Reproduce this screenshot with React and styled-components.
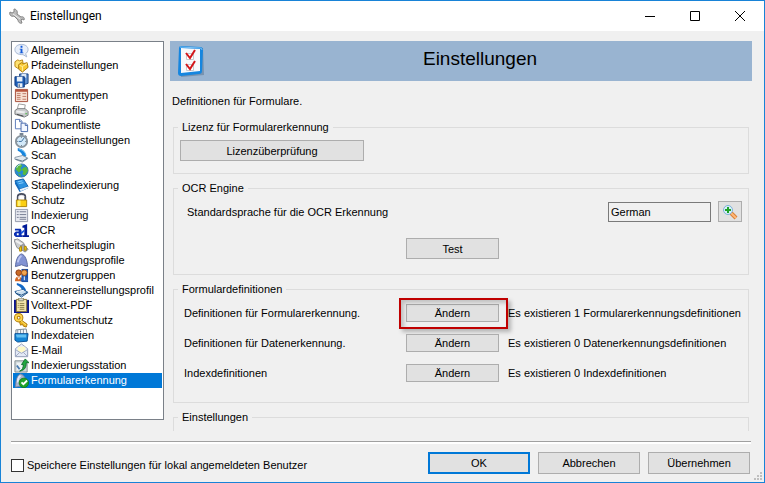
import React, { useState } from "react";
import styled, { createGlobalStyle, css } from "styled-components";

const GlobalStyle = createGlobalStyle`
  * { box-sizing: border-box; }
  body { margin: 0; background: #f0f0f0; }
  body, button, input {
    font-family: "Liberation Sans", Arial, sans-serif;
    font-size: 11px;
    line-height: 14px;
    color: #000;
  }
`;

const Window = styled.div`
  display: flex;
  flex-direction: column;
  height: 100vh;
  border: 1px solid #1883d7;
  background: #f0f0f0;
  overflow: hidden;
  position: relative;
`;

const TitleBar = styled.header`
  display: flex;
  align-items: center;
  flex: none;
  height: 30px;
  padding: 0 2px 0 8px;
  background: #fff;
`;

const WindowTitle = styled.h1`
  flex: 1;
  margin: 0 0 0 5px;
  font: 400 12px/16px Roboto, "Liberation Sans", sans-serif;
`;

const CaptionButton = styled.button`
  display: flex;
  align-items: center;
  justify-content: center;
  width: 45px;
  height: 28px;
  padding: 0;
  border: 0;
  background: none;
`;

const Body = styled.div`
  display: flex;
  flex: 1;
  min-height: 0;
  gap: 6px;
  padding: 10px 12px 0 10px;
`;

const CategoryList = styled.ul`
  flex: none;
  width: 153px;
  margin: 0 0 11px;
  padding: 1px;
  border: 1px solid #7a8088;
  background: #fff;
  list-style: none;
  overflow: hidden;
`;

const CategoryButton = styled.button`
  display: flex;
  align-items: center;
  gap: 2px;
  width: 100%;
  height: 15px;
  padding: 0 0 0 1px;
  border: 0;
  background: ${(p) => (p.$selected ? "#0078d7" : "transparent")};
  color: ${(p) => (p.$selected ? "#fff" : "#000")};
  white-space: nowrap;
  svg { flex: none; }
`;

const CategoryName = styled.span`
  padding-bottom: 2px;
`;

const Pane = styled.main`
  flex: 1;
  min-width: 0;
  overflow: hidden;
`;

const Banner = styled.div`
  display: grid;
  grid-template-columns: 40px 1fr 2px;
  align-items: center;
  height: 40px;
  background: #99b4d1;
`;

const BannerTitle = styled.h2`
  margin: 0;
  padding-bottom: 4px;
  font-size: 19px;
  font-weight: 400;
  line-height: 24px;
  text-align: center;
`;

const Intro = styled.p`
  margin: 13px 0 12px 2px;
`;

const Groups = styled.div`
  display: flex;
  flex-direction: column;
  gap: 7px;
  padding: 0 3px;
`;

const Group = styled.fieldset`
  flex: none;
  min-width: 0;
  margin: 0;
  padding: 6px 6px ${(p) => p.$bottom || 12}px;
  border: 1px solid #dcdcdc;
`;

const Legend = styled.legend`
  margin-left: -2px;
  padding: 0 4px;
`;

const buttonFace = css`
  padding: 0;
  border: 1px solid #adadad;
  background: #e1e1e1;
  text-align: center;
`;

const PushButton = styled.button`
  ${buttonFace}
  width: ${(p) => p.$width || 93}px;
  height: ${(p) => p.$height || 21}px;
`;

const DialogButton = styled.button`
  ${buttonFace}
  width: 102px;
  height: 22px;
  border: ${(p) => (p.$primary ? "2px solid #0078d7" : "1px solid #adadad")};
`;

const IconButton = styled.button`
  ${buttonFace}
  display: flex;
  align-items: center;
  justify-content: center;
  width: 24px;
  height: 21px;
`;

const LanguageRow = styled.div`
  display: flex;
  align-items: center;
  gap: 7px;
  padding-left: 7px;
`;

const LanguageLabel = styled.label`
  flex: 1;
`;

const LanguageInput = styled.input`
  width: 103px;
  height: 20px;
  padding: 0 2px;
  border: 1px solid #7a7a7a;
  background: #f0f0f0;
`;

const Columns = styled.div`
  display: grid;
  grid-template-columns: 222px 93px 1fr;
  align-items: center;
  row-gap: 12px;
  padding: ${(p) => p.$top}px 0 0 4px;
  white-space: nowrap;
`;

const TestButton = styled(PushButton)`
  grid-column: 2;
`;

const Status = styled.span`
  position: relative;
  z-index: 1;
  margin-left: 9px;
`;

const Marked = styled.div`
  position: relative;
  display: flex;
`;

const Highlight = styled.span`
  position: absolute;
  inset: -6px -9px -7px -7px;
  border: 2px solid #c00000;
  box-shadow: 3px 3px 4px rgba(0, 0, 0, 0.25), inset 3px 3px 4px rgba(0, 0, 0, 0.2);
  pointer-events: none;
`;

const Footer = styled.footer`
  display: flex;
  align-items: center;
  flex: none;
  gap: 8px;
  height: 41px;
  margin: 10px 13px 0 10px;
  padding: 2px 1px 0 0;
  border-top: 1px solid #a0a0a0;
  box-shadow: inset 0 2px 0 #fff;
`;

const SaveLabel = styled.label`
  display: flex;
  align-items: center;
  flex: 1;
  gap: 3px;
  padding-top: 4px;
`;

const CheckBox = styled.input`
  appearance: none;
  width: 13px;
  height: 13px;
  margin: 0;
  border: 1px solid #333;
  background: #fff;
  &:checked { box-shadow: inset 0 0 0 2px #fff; background: #333; }
`;

const Grip = styled.svg`
  position: absolute;
  right: 2px;
  bottom: 2px;
`;

const drawings = {
  info: (
    <>
      <path d="M8 1.500c4 0 7 2.300 7 5.400 0 2-1 3.500-2.600 4.500l1.200 3.400-4-2.400C4 12.700 1 10.500 1 7 1 3.800 4 1.500 8 1.500z" fill="#e8effa" stroke="#a3b4d0" />
      <path d="M7 3h2v2H7zM6 6h3v4h1v1H6v-1h1V7H6z" fill="#1259d8" />
    </>
  ),
  folders: (
    <>
      <path d="M1 4l3-2 2 1 3-1 1 5-6 4-3-2z" fill="#ffe272" stroke="#b78310" />
      <path d="M5 7l3-2 2 1 4-1 1 5-6 5-4-3z" fill="#f8c832" stroke="#a8780a" />
      <path d="M6 8l3 1 5-3M9 9v5" fill="none" stroke="#fff0a5" />
    </>
  ),
  disks: (
    <>
      <path d="M6 1h9v10l-3 1H6z" fill="#5f90cf" stroke="#173f7e" />
      <path d="M8 1h5v4H8z" fill="#dce8f5" />
      <path d="M1 4h10v11H3l-2-2z" fill="#1d5db5" stroke="#103b80" />
      <path d="M3 4h6v5H3zM4 11h5v4H4z" fill="#e8f0f8" />
      <path d="M5 12h1v3H5z" fill="#233d60" />
    </>
  ),
  types: (
    <>
      <path d="M1.500 1.500h13v13h-13z" fill="#f6dfd2" stroke="#a34a35" />
      <path d="M2 2h12v2H2z" fill="#b8563e" />
      <path d="M3 6h4M3 8h4M3 10h4M3 12h4M9 6h4M9 9h4M9 12h4" stroke="#bd7b66" />
    </>
  ),
  printer: (
    <>
      <path d="M5 1l7 1-1 6H3z" fill="#fff" stroke="#9b9b9b" />
      <path d="M1 8l3-2h8l3 3v4l-4 2-10-3z" fill="#c9cbcd" stroke="#7b7e80" />
      <path d="M3 8l9 1-1 2-9-1z" fill="#eeeff0" />
      <path d="M3 12l7 2" stroke="#3f4345" />
      <path d="M12 11h2v1h-2z" fill="#43b83d" />
    </>
  ),
  pages: (
    <>
      <path d="M1.500 1.500h5l2 2v8h-7z" fill="#fff" stroke="#5878b8" />
      <path d="M7.500 5.500h5l2 2v7h-7z" fill="#f3f7ff" stroke="#4567ac" />
      <path d="M6 2v2h2M12 6v2h2" fill="none" stroke="#4567ac" />
    </>
  ),
  watch: (
    <>
      <path d="M6 0h4v3H6zM12 2l2 2-1 1-2-2z" fill="#758493" />
      <circle cx="8" cy="9" r="6" fill="#d3e9f9" stroke="#8a959e" strokeWidth="2" />
      <path d="M8 9l3-4M8 9H5" stroke="#376b9c" />
      <path d="M8 4v1M8 13v1M3 9h1M12 9h1" stroke="#536575" />
    </>
  ),
  scan: (
    <>
      <path d="M4 0c5 1 9 4 9 9l-4 1C9 6 7 4 4 3z" fill="#1684dd" />
      <path d="M5 1c4 1 7 3 8 7" fill="none" stroke="#74c3f5" />
      <path d="M1 10l8-2 6 3-6 4-8-3z" fill="#e3eaf0" stroke="#8697a6" />
      <path d="M2 12l7 2 5-3" fill="none" stroke="#5e7689" />
    </>
  ),
  globe: (
    <>
      <circle cx="8" cy="8" r="7" fill="#258bd5" stroke="#3a77a4" />
      <path d="M3 3l4-2 2 2-2 2 1 3-3 2-3-3zM10 5l3-1 2 4-3 5-3-1 1-3-2-2zM4 11l3 1v3z" fill="#59b93f" />
      <path d="M3 5c1-2 2-3 4-3" stroke="#d5f3ff" fill="none" />
    </>
  ),
  book: (
    <>
      <path d="M1 3l9-2 5 8-9 3z" fill="#2a90df" stroke="#0d5ba8" />
      <path d="M1 3v3l5 9 9-4V9l-9 3z" fill="#136bbf" />
      <path d="M6 12l9-3v2l-8 3z" fill="#e9f2fa" />
      <path d="M4 4l5-1M5 6l5-1" stroke="#8ed1ff" />
    </>
  ),
  lock: (
    <>
      <path d="M4 8V4c0-4 8-4 8 0v4" fill="none" stroke="#494f61" strokeWidth="2" />
      <path d="M5 7V4c0-2 6-2 6 0" fill="none" stroke="#d7dae3" />
      <path d="M2.500 7.500h11v7h-11z" fill="#fbcf12" stroke="#a98006" />
      <path d="M4 8h3v6H4z" fill="#fff175" />
    </>
  ),
  index: (
    <>
      <path d="M1.500 1.500h13v13h-13z" fill="#e6e8ef" stroke="#9299aa" />
      <path d="M6 4h7M6 7h7M6 10h7M6 12h7M3 4h2M3 7h2M3 10h2" stroke="#737b91" />
    </>
  ),
  ocr: (
    <>
      <path d="M1 6h6l1 2v5h1v2H2l-2-2v-2l2-2h3V8H1zM3 11v2h2v-2z" fill="#0a2fb4" />
      <path d="M9 3l5-2v12h2v2H9v-2h2V5H9z" fill="#001a99" />
      <path d="M7 10l4-3v2l-3 3z" fill="#1a55dc" />
    </>
  ),
  plug: (
    <>
      <path d="M0 2l4-1 6 4 2 4-5 4-4-3-2-5z" fill="#c9cbce" stroke="#8a8c92" />
      <path d="M2 3l7 4" stroke="#f0f0f1" strokeWidth="2" />
      <path d="M7 8l3-1 5 5-3 3-5-3z" fill="#a8a9ae" stroke="#85878d" />
      <path d="M6 10l2-1v5H6zM11 9h2v4h-2z" fill="#fbd41b" stroke="#ae8602" />
    </>
  ),
  profile: (
    <>
      <path d="M1.500 14.500C2 8 4 2 8 1c4 1 6 7 6.500 13.500l-4-1-2.500-1-3 1z" fill="#8293d3" stroke="#59679d" />
      <path d="M4 10c1-4 2-6 4-7" stroke="#bbc5f1" strokeWidth="2" fill="none" />
    </>
  ),
  users: (
    <>
      <path d="M8 1h7v14H8z" fill="#174da5" />
      <circle cx="5" cy="5" r="3" fill="#c96b26" stroke="#8b3510" />
      <circle cx="11" cy="5" r="3" fill="#f2a650" stroke="#9e4f17" />
      <path d="M1 14c0-7 8-7 8 0z" fill="#d66824" />
      <path d="M7 14c0-7 8-7 8 0z" fill="#285fb7" />
      <path d="M4 9l1 3 2-3M11 9v4" stroke="#fff" fill="none" />
    </>
  ),
  scanProfile: (
    <>
      <path d="M3 0c5 1 8 3 10 8L9 9C8 5 6 3 3 2z" fill="#1268c7" />
      <path d="M1 9l9-2 5 3-7 5-6-4z" fill="#c7ddef" stroke="#1d5591" />
      <path d="M2 11l6 2 6-3" stroke="#174879" fill="none" />
      <path d="M3 9l7-1" stroke="#fff" />
    </>
  ),
  clipboard: (
    <>
      <path d="M0 2h16v14H0z" fill="#0c1690" />
      <path d="M2.500 1.500h11v13h-11z" fill="#f3e4aa" stroke="#867333" />
      <path d="M5 0h5v3H5z" fill="#d7d7d2" stroke="#8b8760" />
      <path d="M6 6h5M6 8h5M6 10h5M6 12h5M4 6h1M4 8h1M4 10h1" stroke="#887a46" />
    </>
  ),
  key: (
    <>
      <path d="M7 7l7 5-1 3-3-1-1-2-2 1-1-3z" fill="#efb622" stroke="#ab7509" />
      <circle cx="5" cy="5" r="3" fill="none" stroke="#ad7909" strokeWidth="4" />
      <circle cx="5" cy="5" r="3" fill="none" stroke="#ffd64c" strokeWidth="2" />
      <path d="M7 8l6 5" stroke="#ffe66f" />
    </>
  ),
  files: (
    <>
      <path d="M2 2l11-1 1 6H2z" fill="#f7f8fb" stroke="#78858f" />
      <path d="M4 2v4M7 1v5M10 1v5" stroke="#83919d" />
      <path d="M1 6h14l-1 8-10 1-3-2z" fill="#1686d5" stroke="#084f95" />
      <path d="M2 7h11v3H3z" fill="#64c0f1" />
    </>
  ),
  mail: (
    <>
      <path d="M1.500 6L8 1l6.500 5v8.500h-13z" fill="#eaeefa" stroke="#98a0b9" />
      <path d="M4 4h8v6H4z" fill="#fff9c7" />
      <path d="M1.500 7L8 11l6.500-4v7.500h-13z" fill="#e3e9f6" stroke="#9ca6bf" />
      <path d="M2 14l4-4M14 14l-4-4" stroke="#9ca6bf" />
    </>
  ),
  station: (
    <>
      <path d="M1 3h10l3 3v9H1z" fill="#d3dadd" stroke="#7f8b90" />
      <path d="M3 5h6v8H3z" fill="#edf3f4" />
      <path d="M6 14c3-1 4-4 4-7H8l4-6 4 4h-3c0 6-2 8-7 9z" fill="#22a841" stroke="#137130" />
      <path d="M3 8l3 4" stroke="#487ab1" strokeWidth="2" />
    </>
  ),
  formCheck: (
    <>
      <path d="M1.500 15C2 9 3 2 7 1c4 1 6 6 7 12z" fill="#a8b4d0" stroke="#7985a1" />
      <path d="M4 10c0-4 1-6 3-7" stroke="#e0e7f5" fill="none" strokeWidth="2" />
      <circle cx="10.500" cy="10.500" r="5" fill="#22a52a" stroke="#138019" />
      <path d="M8 10l2 2 4-4" fill="none" stroke="#fff" strokeWidth="2" />
    </>
  ),
};

const CategoryIcon = ({ name }) => (
  <svg width="15" height="15" viewBox="0 0 16 16" aria-hidden="true">
    {drawings[name]}
  </svg>
);

const WrenchIcon = () => (
  <svg width="16" height="16" viewBox="0 0 16 16" aria-hidden="true">
    <path
      d="M1 4l2 1 2-1V1c2 0 4 2 3 5l4 3c2-1 4 1 3 3l-2-1-1 1 1 3c-2 1-4-1-4-3L5 8C2 9 0 7 1 4z"
      fill="#bcbcbc"
      stroke="#858585"
    />
    <path d="M4 6l7 5" stroke="#ececec" />
  </svg>
);

const ChecklistIcon = () => (
  <svg width="40" height="40" viewBox="0 0 40 40" aria-hidden="true">
    <path d="M10 8l23-1 1 27-23 2z" fill="#58718e" opacity=".5" />
    <path d="M11 5l19 1q3 0 3 3l-1 21q0 3-3 3l-18 2q-3 0-3-3L9 7q0-2 2-2z" fill="#1686df" />
    <path d="M10 6l20 1q2 0 2 2" fill="none" stroke="#7fc3f5" />
    <path d="M11 7l19 1v22l-19 2z" fill="#f7f9fc" />
    <path d="M16.500 12.500h7v6h-7zM16.500 23.500h7v6h-7z" fill="#fff" stroke="#c6cad0" />
    <path d="M16 12l4 5 5-8M16 23l4 5 5-8" fill="none" stroke="#d3161b" strokeWidth="2" />
  </svg>
);

const ZoomIcon = () => (
  <svg width="16" height="16" viewBox="0 0 16 16" aria-hidden="true">
    <path d="M9 9l5 5" stroke="#d98138" strokeWidth="4" />
    <path d="M9 9l5 5" stroke="#ffb878" strokeWidth="2" />
    <circle cx="6" cy="6" r="4.500" fill="#d7effa" stroke="#7fb2d6" />
    <path d="M3 6h6M6 3v6" stroke="#1fa32a" strokeWidth="2" />
  </svg>
);

const categories = [
  ["info", "Allgemein"],
  ["folders", "Pfadeinstellungen"],
  ["disks", "Ablagen"],
  ["types", "Dokumenttypen"],
  ["printer", "Scanprofile"],
  ["pages", "Dokumentliste"],
  ["watch", "Ablageeinstellungen"],
  ["scan", "Scan"],
  ["globe", "Sprache"],
  ["book", "Stapelindexierung"],
  ["lock", "Schutz"],
  ["index", "Indexierung"],
  ["ocr", "OCR"],
  ["plug", "Sicherheitsplugin"],
  ["profile", "Anwendungsprofile"],
  ["users", "Benutzergruppen"],
  ["scanProfile", "Scannereinstellungsprofil"],
  ["clipboard", "Volltext-PDF"],
  ["key", "Dokumentschutz"],
  ["files", "Indexdateien"],
  ["mail", "E-Mail"],
  ["station", "Indexierungsstation"],
  ["formCheck", "Formularerkennung"],
];

const definitions = [
  ["Definitionen für Formularerkennung.", "Es existieren 1 Formularerkennungsdefinitionen", true],
  ["Definitionen für Datenerkennung.", "Es existieren 0 Datenerkennungsdefinitionen", false],
  ["Indexdefinitionen", "Es existieren 0 Indexdefinitionen", false],
];

export default function App() {
  const [selected, setSelected] = useState("Formularerkennung");
  const [saveLocal, setSaveLocal] = useState(false);

  return (
    <>
      <GlobalStyle />
      <Window>
        <TitleBar>
          <WrenchIcon />
          <WindowTitle>Einstellungen</WindowTitle>
          <CaptionButton aria-label="Minimieren">
            <svg width="10" height="10"><path d="M0 5.500h10" stroke="#000" /></svg>
          </CaptionButton>
          <CaptionButton aria-label="Maximieren">
            <svg width="10" height="10"><path d="M.5.500h9v9h-9z" fill="none" stroke="#000" /></svg>
          </CaptionButton>
          <CaptionButton aria-label="Schließen">
            <svg width="10" height="10"><path d="M0 0l10 10M10 0L0 10" stroke="#000" /></svg>
          </CaptionButton>
        </TitleBar>

        <Body>
          <CategoryList>
            {categories.map(([icon, label]) => (
              <li key={label}>
                <CategoryButton $selected={selected === label} onClick={() => setSelected(label)}>
                  <CategoryIcon name={icon} />
                  <CategoryName>{label}</CategoryName>
                </CategoryButton>
              </li>
            ))}
          </CategoryList>

          <Pane>
            <Banner>
              <ChecklistIcon />
              <BannerTitle>Einstellungen</BannerTitle>
            </Banner>
            <Intro>Definitionen für Formulare.</Intro>
            <Groups>
              <Group>
                <Legend>Lizenz für Formularerkennung</Legend>
                <PushButton $width={184}>Lizenzüberprüfung</PushButton>
              </Group>

              <Group $bottom={15}>
                <Legend>OCR Engine</Legend>
                <LanguageRow>
                  <LanguageLabel htmlFor="language">Standardsprache für die OCR Erkennung</LanguageLabel>
                  <LanguageInput id="language" value="German" readOnly />
                  <IconButton aria-label="Sprache wählen"><ZoomIcon /></IconButton>
                </LanguageRow>
                <Columns $top={16}>
                  <TestButton>Test</TestButton>
                </Columns>
              </Group>

              <Group $bottom={20}>
                <Legend>Formulardefinitionen</Legend>
                <Columns $top={2}>
                  {definitions.map(([label, status, marked]) => (
                    <React.Fragment key={label}>
                      <span>{label}</span>
                      <Marked>
                        <PushButton $height={18}>Ändern</PushButton>
                        {marked && <Highlight />}
                      </Marked>
                      <Status>{status}</Status>
                    </React.Fragment>
                  ))}
                </Columns>
              </Group>

              <Group $bottom={60}>
                <Legend>Einstellungen</Legend>
              </Group>
            </Groups>
          </Pane>
        </Body>

        <Footer>
          <SaveLabel>
            <CheckBox
              type="checkbox"
              checked={saveLocal}
              onChange={(e) => setSaveLocal(e.target.checked)}
            />
            Speichere Einstellungen für lokal angemeldeten Benutzer
          </SaveLabel>
          <DialogButton $primary>OK</DialogButton>
          <DialogButton>Abbrechen</DialogButton>
          <DialogButton>Übernehmen</DialogButton>
        </Footer>
        <Grip width="8" height="8" aria-hidden="true">
          <path d="M6 0h2v2H6zM3 3h2v2H3zM6 3h2v2H6zM0 6h2v2H0zM3 6h2v2H3zM6 6h2v2H6z" fill="#bfbfbf" />
        </Grip>
      </Window>
    </>
  );
}
